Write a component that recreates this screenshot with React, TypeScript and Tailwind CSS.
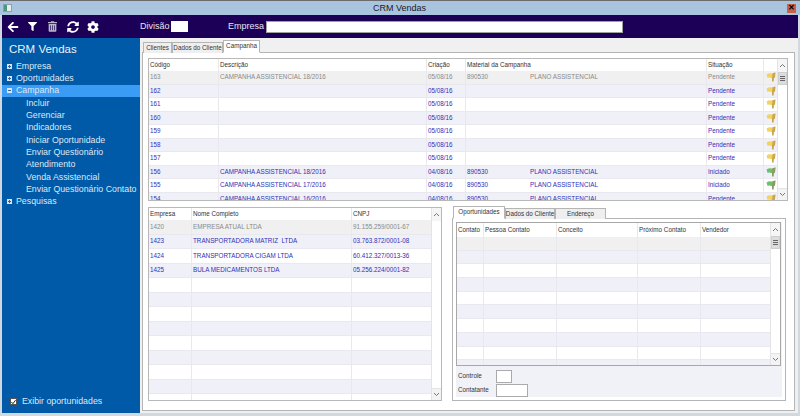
import React from "react";
import { FaArrowLeft, FaFilter, FaTrashAlt, FaSyncAlt, FaCog } from "react-icons/fa";

const Flag = ({ green }: { green?: boolean }) => (
  <svg width="10" height="10" viewBox="0 0 10 10" className="block -ml-[1px]">
    <path d="M.5 2.4 L3 1.2 L6 1.4 L9.4 .6 L9 5.6 L6.4 6.2 L3 5.6 L1.6 6 Z" fill={green ? "#6cc070" : "#f4d25e"} />
    <path d="M6.6 1.2 L9.4 .6 L9 5.6 L8 5.9 L7.6 9.6 L6 9.6 L6 6.2 Z" fill={green ? "#8f9a62" : "#c9a650"} />
  </svg>
);

const ScrollBar = ({ thumbTop = true, width = "w-[10px]" }: { thumbTop?: boolean; width?: string }) => (
  <div className={`${width} shrink-0 flex flex-col bg-white border-l border-[#e4e4e4]`}>
    <div className="h-[13px] shrink-0 flex items-center justify-center text-[#777] bg-[#f5f5f5]">
      <svg width="7" height="5" viewBox="0 0 7 5"><path d="M1 4 L3.5 1.5 L6 4" fill="none" stroke="currentColor" /></svg>
    </div>
    {thumbTop && (
      <div className="h-[13px] shrink-0 bg-[#dcdcdc] border border-[#cfcfcf] flex flex-col gap-[1px] items-center justify-center">
        <div className="w-[5px] h-[1px] bg-[#666]" />
        <div className="w-[5px] h-[1px] bg-[#666]" />
        <div className="w-[5px] h-[1px] bg-[#666]" />
      </div>
    )}
    <div className="flex-1" />
    <div className="h-[12px] shrink-0 flex items-center justify-center text-[#777] bg-[#f3f3f3] border-t border-[#e4e4e4]">
      <svg width="7" height="5" viewBox="0 0 7 5"><path d="M1 1 L3.5 3.5 L6 1" fill="none" stroke="currentColor" /></svg>
    </div>
  </div>
);

const bgFor = (i: number) => (i === 0 ? "bg-[#f0f0f0]" : i % 2 === 1 ? "bg-[#f0f1f8]" : "bg-white");

type Cell = string | React.ReactNode;

const Grid = ({ widths, header, rows, rowH, headH, rowCount }: { widths: number[]; header: string[]; rows: Cell[][]; rowH: number; headH: number; rowCount: number }) => (
  <div className="flex-1 min-w-0 overflow-hidden">
    <div className="flex bg-white text-[#333]" style={{ height: headH }}>
      {header.map((h, i) => (
        <div key={i} className="shrink-0 pl-[1px] border-r border-[#e8e8e8] flex items-center overflow-hidden whitespace-pre" style={{ width: widths[i] }}>{h}</div>
      ))}
    </div>
    {Array.from({ length: rowCount }).map((_, r) => (
      <div key={r} className={`flex ${bgFor(r)} ${r === 0 ? "text-[#8a8a8a]" : "text-[#3030b4]"}`} style={{ height: rowH }}>
        {widths.map((w, c) => (
          <div key={c} className="shrink-0 pl-[1px] border-r border-b border-[#e8e8ee] flex items-center overflow-hidden whitespace-pre" style={{ width: w }}>{rows[r]?.[c] ?? ""}</div>
        ))}
      </div>
    ))}
  </div>
);

const Mat = ({ on }: { on: boolean }) => (
  on ? <div className="flex w-full"><span className="w-[63px] shrink-0">890530</span><span>PLANO ASSISTENCIAL</span></div> : <span />
);

const FlagCell = ({ green }: { green?: boolean }) => <div className="w-full flex justify-center"><Flag green={green} /></div>;

const camp: Cell[][] = [
  ["163", "CAMPANHA ASSISTENCIAL 18/2016", "05/08/16", <Mat on />, "Pendente", <FlagCell />],
  ["162", "", "05/08/16", "", "Pendente", <FlagCell />],
  ["161", "", "05/08/16", "", "Pendente", <FlagCell />],
  ["160", "", "05/08/16", "", "Pendente", <FlagCell />],
  ["159", "", "05/08/16", "", "Pendente", <FlagCell />],
  ["158", "", "05/08/16", "", "Pendente", <FlagCell />],
  ["157", "", "05/08/16", "", "Pendente", <FlagCell />],
  ["156", "CAMPANHA ASSISTENCIAL 18/2016", "04/08/16", <Mat on />, "Iniciado", <FlagCell green />],
  ["155", "CAMPANHA ASSISTENCIAL 17/2016", "04/08/16", <Mat on />, "Iniciado", <FlagCell green />],
  ["154", "CAMPANHA ASSISTENCIAL 16/2016", "04/08/16", <Mat on />, "Pendente", <FlagCell />],
];

const emp: Cell[][] = [
  ["1420", "EMPRESA ATUAL LTDA", "91.155.259/0001-67"],
  ["1423", "TRANSPORTADORA MATRIZ  LTDA", "03.763.872/0001-08"],
  ["1424", "TRANSPORTADORA CIGAM LTDA", "60.412.327/0013-36"],
  ["1425", "BULA MEDICAMENTOS LTDA", "05.256.224/0001-82"],
];

const SideItem = ({ label, state, active }: { label: string; state: "+" | "-"; active?: boolean }) => (
  <div className={`h-[12.33px] flex items-center pl-[5px] ${active ? "bg-[#3a9cf5]" : ""}`}>
    <div className="w-[5px] h-[5px] mr-[4px] bg-[#d8e4f0] relative shrink-0 border border-[#d8e4f0]">
      <div className="absolute left-0 right-0 top-[1px] h-[1px] bg-[#33649a]" />
      {state === "+" && <div className="absolute top-0 bottom-0 left-[1px] w-[1px] bg-[#33649a]" />}
    </div>
    <span>{label}</span>
  </div>
);

const Sub = ({ label }: { label: string }) => <div className="h-[12.33px] flex items-center pl-[24px] whitespace-nowrap">{label}</div>;

const Tab = ({ label, active, w }: { label: string; active?: boolean; w: number }) => (
  <div style={{ width: w }} className={`flex items-center justify-center border border-[#b5b5b5] whitespace-nowrap text-[#333] ${active ? "bg-white border-b-white h-[13px] z-10" : "bg-[#efefef] h-[11px] border-b-0"}`}>{label}</div>
);

export default function App() {
  return (
    <div className="w-[800px] h-[416px] overflow-hidden flex flex-col bg-[#5a6a7a] text-[6.3px] leading-none font-['Liberation_Sans',sans-serif]">
      <div className="h-[1px] bg-[#6b6b6b]" />
      <div className="h-[14px] shrink-0 bg-[#a9c4de] flex items-center px-[3px]">
        <div className="w-[9px] h-[8px] bg-[#e8eef0] border border-[#8aa0b0] flex">
          <div className="w-[3px] h-full bg-[#4a9a7a]" />
        </div>
        <div className="flex-1 text-center text-[9px] text-[#1a1a2a]">CRM Vendas</div>
        <div className="w-[9px] h-[9px] mr-[1px] bg-[#c8604a] flex items-center justify-center text-black text-[8px] font-bold">✕</div>
      </div>
      <div className="flex-1 min-h-0 flex flex-col bg-[#d0d8e0] px-[2px] pb-[3px]">
        <div className="h-[23px] shrink-0 bg-[#1c0058] flex items-center text-[#e4e4f0] text-[9px]">
          <div className="flex items-center text-white">
            <FaArrowLeft className="ml-[4px] w-[14px] h-[12px]" />
            <FaFilter className="ml-[8px] w-[9px] h-[9px]" />
            <FaTrashAlt className="ml-[11px] w-[9px] h-[11px] text-[#b8b8c8]" />
            <FaSyncAlt className="ml-[10px] w-[12px] h-[12px]" />
            <FaCog className="ml-[8px] w-[12px] h-[12px]" />
          </div>
          <span className="ml-[41px] w-[31px]">Divisão</span>
          <div className="w-[17px] h-[11px] bg-white" />
          <span className="ml-[40px] w-[38px]">Empresa</span>
          <div className="w-[357px] h-[12px] bg-white border border-[#a0a0a0]" />
        </div>
        <div className="flex-1 min-h-0 flex">
          <div className="w-[138px] shrink-0 bg-[#005aa8] text-[#dce8f4] text-[8.8px] flex flex-col">
            <div className="pl-[7px] pt-[5px] h-[22px] text-[11.5px] text-[#eaf2fa] leading-[12px]">CRM Vendas</div>
            <SideItem label="Empresa" state="+" />
            <SideItem label="Oportunidades" state="+" />
            <SideItem label="Campanha" state="-" active />
            {["Incluir", "Gerenciar", "Indicadores", "Iniciar Oportunidade", "Enviar Questionário", "Atendimento", "Venda Assistencial", "Enviar Questionário Contato"].map((s) => <Sub key={s} label={s} />)}
            <SideItem label="Pesquisas" state="+" />
            <div className="flex-1" />
            <div className="flex items-center pl-[8px] pb-[7px] text-[8.8px]">
              <div className="w-[7px] h-[7px] bg-white border border-[#555] mr-[5px] flex items-center justify-center">
                <svg width="6" height="6" viewBox="0 0 6 6"><path d="M.5 3 L2.3 5 L5.5 .8" fill="none" stroke="#222" strokeWidth="1.2" /></svg>
              </div>
              Exibir oportunidades
            </div>
          </div>
          <div className="flex-1 min-w-0 bg-[#f0f0f0] pl-[2px] pr-[3px] pt-[2px] flex flex-col">
            <div className="flex items-end h-[13px] shrink-0 pl-[1px] relative z-10 -mb-[1px]">
              <Tab label="Clientes" w={29} />
              <Tab label="Dados do Cliente" w={51} />
              <Tab label="Campanha" w={37} active />
            </div>
            <div className="flex-1 min-h-0 bg-white border border-[#b5b5b5] pl-[5px] pr-[6px] pt-[5px] pb-[9px] flex flex-col">
              <div className="h-[143px] shrink-0 border border-[#b8b8b8] flex overflow-hidden">
                <Grid widths={[70, 208, 39, 241, 57, 14]} header={["Código", "Descrição", "Criação", "Material da Campanha", "Situação", ""]} rows={camp} rowH={13.5} headH={12} rowCount={10} />
                <ScrollBar />
              </div>
              <div className="flex-1 min-h-0 flex mt-[6px]">
                <div className="w-[294px] shrink-0 border border-[#b8b8b8] flex overflow-hidden">
                  <Grid widths={[43, 160, 80]} header={["Empresa", "Nome Completo", "CNPJ"]} rows={emp} rowH={14.5} headH={12} rowCount={13} />
                  <ScrollBar thumbTop={false} />
                </div>
                <div className="ml-[10px] w-[334px] shrink-0 flex flex-col">
                  <div className="flex items-end h-[12px] shrink-0 pl-[1px] relative z-10 -mb-[1px]">
                    <Tab label="Oportunidades" w={52} active />
                    <Tab label="Dados do Cliente" w={50} />
                    <Tab label="Endereço" w={51} />
                  </div>
                  <div className="flex-1 min-h-0 border border-[#b5b5b5] bg-white pl-[3px] pr-[3px] pt-[3px] pb-[3px] flex flex-col">
                    <div className="flex-1 min-h-0 bg-[#f0f2f8] flex flex-col pr-[1px]">
                      <div className="h-[144px] shrink-0 bg-white border border-[#a8a8a8] flex overflow-hidden">
                        <Grid widths={[27, 73, 81, 63, 70]} header={["Contato", "Pessoa Contato", "Conceito", "Próximo Contato", "Vendedor"]} rows={[]} rowH={13.7} headH={14} rowCount={10} />
                        <ScrollBar />
                      </div>
                      <div className="flex items-center mt-[4px] h-[13px] text-[#333] pl-[2px]">
                        <span className="w-[38px]">Controle</span>
                        <div className="w-[16px] h-[13px] bg-white border border-[#aaa]" />
                      </div>
                      <div className="flex items-center mt-[1px] h-[13px] text-[#333] pl-[2px]">
                        <span className="w-[38px]">Contatante</span>
                        <div className="w-[32px] h-[13px] bg-white border border-[#aaa]" />
                      </div>
                    </div>
                  </div>
                </div>
              </div>
            </div>
            <div className="h-[2px] shrink-0" />
          </div>
        </div>
      </div>
    </div>
  );
}
